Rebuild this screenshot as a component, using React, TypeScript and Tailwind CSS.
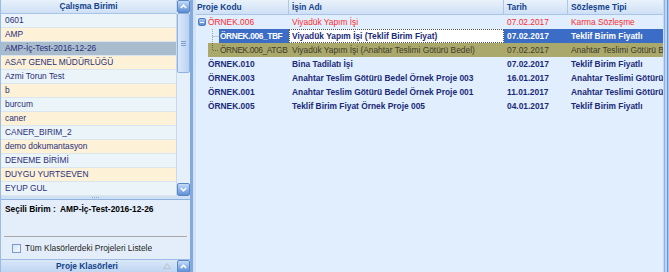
import React from "react";

const units = [
  "0601",
  "AMP",
  "AMP-İç-Test-2016-12-26",
  "ASAT GENEL MÜDÜRLÜĞÜ",
  "Azmi Torun Test",
  "b",
  "burcum",
  "caner",
  "CANER_BIRIM_2",
  "demo dokumantasyon",
  "DENEME BİRİMİ",
  "DUYGU YURTSEVEN",
  "EYUP GUL",
];

type Proje = {
  kod: string;
  ad: string;
  tarih: string;
  tip: string;
  level: number;
  kind: "red" | "sel" | "olive" | "normal";
  last?: boolean;
};

const projeler: Proje[] = [
  { kod: "ÖRNEK.006", ad: "Viyadük Yapım İşi", tarih: "07.02.2017", tip: "Karma Sözleşme", level: 0, kind: "red" },
  { kod: "ÖRNEK.006_TBF", ad: "Viyadük Yapım İşi (Teklif Birim Fiyat)", tarih: "07.02.2017", tip: "Teklif Birim Fiyatlı", level: 1, kind: "sel" },
  { kod: "ÖRNEK.006_ATGB", ad: "Viyadük Yapım İşi (Anahtar Teslimi Götürü Bedel)", tarih: "07.02.2017", tip: "Anahtar Teslimi Götürü Bedel", level: 1, kind: "olive", last: true },
  { kod: "ÖRNEK.010", ad: "Bina Tadilatı İşi", tarih: "07.02.2017", tip: "Teklif Birim Fiyatlı", level: 0, kind: "normal" },
  { kod: "ÖRNEK.003", ad: "Anahtar Teslim Götürü Bedel Örnek Proje 003", tarih: "16.01.2017", tip: "Anahtar Teslimi Götürü Bedel", level: 0, kind: "normal" },
  { kod: "ÖRNEK.001", ad: "Anahtar Teslim Götürü Bedel Örnek Proje 001", tarih: "11.01.2017", tip: "Anahtar Teslimi Götürü Bedel", level: 0, kind: "normal" },
  { kod: "ÖRNEK.005", ad: "Teklif Birim Fiyat Örnek Proje 005", tarih: "04.01.2017", tip: "Teklif Birim Fiyatlı", level: 0, kind: "normal" },
];

function ScrollBtn({ down }: { down?: boolean }) {
  return (
    <div className="w-[13px] h-[13px] shrink-0 rounded-[2px] border border-[#5b86c4] bg-gradient-to-b from-[#c4dcf7] via-[#8db5ea] to-[#5e8fd3] flex items-center justify-center">
      <svg width="7" height="5" viewBox="0 0 7 5">
        <path
          d={down ? "M0.8 1 L3.5 3.8 L6.2 1" : "M0.8 4 L3.5 1.2 L6.2 4"}
          stroke="white"
          strokeWidth="1.5"
          fill="none"
        />
      </svg>
    </div>
  );
}

function TreeCell({ p }: { p: Proje }) {
  if (p.level === 0) {
    return (
      <div className="flex items-center h-full">
        <div className="w-[12px] shrink-0 h-full flex items-center justify-center">
          {p.kind === "red" && (
            <div className="w-[8px] h-[8px] rounded-[2px] border border-[#4f7cc0] bg-gradient-to-b from-[#a9c8f0] to-[#5b8ad0] flex items-center justify-center">
              <div className="w-[4px] h-[1px] bg-white" />
            </div>
          )}
        </div>
        <span>{p.kod}</span>
      </div>
    );
  }
  const sel = p.kind === "sel";
  return (
    <div className="flex items-center h-full">
      <div className={`w-[12px] shrink-0 h-full ${p.kind === "olive" ? "bg-[#dfedfd]" : ""}`} />
      <svg width="11" height="14" viewBox="0 0 11 14" className="shrink-0">
        <path
          d={p.last ? "M4.5 0 V7.5 H11" : "M4.5 0 V14 M4.5 7.5 H11"}
          stroke={p.kind === "olive" ? "#6b6a3e" : "#9aa6b8"}
          strokeWidth="1"
          strokeDasharray="1 1"
          fill="none"
        />
      </svg>
      <div
        className={`h-full flex items-center pl-[1px] flex-1 min-w-0 tracking-[-0.4px] ${
          sel ? "bg-[#3b6cc6] text-white" : ""
        }`}
      >
        {p.kod}
      </div>
    </div>
  );
}

export default function App() {
  return (
    <div className="w-[669px] h-[272px] flex overflow-hidden bg-[#dfeefd] font-['Liberation_Sans',Arial,sans-serif] text-[8.4px] leading-none">
      {/* left panel */}
      <div className="w-[193px] h-full flex flex-col border-l border-r-[3px] border-l-[#9cbbe3] border-r-[#84a9dc] bg-[#e4eefa]">
        <div className="h-[196px] flex">
          <div className="w-[175px] flex flex-col">
            <div className="h-[14px] shrink-0 flex items-center justify-center border-b border-[#a9c4e6] bg-gradient-to-b from-[#e8f1fb] to-[#cfe0f5] font-bold text-[#15428b]">
              Çalışma Birimi
            </div>
            {units.map((u, i) => (
              <div
                key={u}
                className={`h-[14px] shrink-0 flex items-center pl-[4px] border-b border-[#dbe5ee] text-[#2a2f78] ${
                  i === 2 ? "bg-[#a8bccd]" : i % 2 === 0 ? "bg-[#eaf4f9]" : "bg-[#fdf1d7]"
                }`}
              >
                {u}
              </div>
            ))}
          </div>
          <div className="w-[14px] flex flex-col items-center bg-[#e6f0fb] border-l border-[#c7d9ef]">
            <ScrollBtn />
            <div className="w-[13px] h-[60px] rounded-[2px] border border-[#8fb1dd] bg-gradient-to-r from-[#dbe9fa] to-[#b9d2f1] flex flex-col items-center justify-center gap-[1px]">
              <div className="w-[5px] h-[1px] bg-[#7d9fcb]" />
              <div className="w-[5px] h-[1px] bg-[#7d9fcb]" />
              <div className="w-[5px] h-[1px] bg-[#7d9fcb]" />
            </div>
            <div className="flex-1" />
            <ScrollBtn down />
          </div>
        </div>
        <div className="h-[3px] flex items-center justify-center bg-[#cfe0f4] gap-[1px]">
          <div className="w-[1px] h-[1px] bg-[#8aa7cf]" />
          <div className="w-[1px] h-[1px] bg-[#8aa7cf]" />
          <div className="w-[1px] h-[1px] bg-[#8aa7cf]" />
          <div className="w-[1px] h-[1px] bg-[#8aa7cf]" />
        </div>
        <div className="flex-1 flex flex-col border-t border-[#8fb1dd]">
          <div className="flex-1 flex flex-col px-[3px] pt-[5px]">
            <div className="font-bold text-black whitespace-nowrap pl-[1px]">
              Seçili Birim :&nbsp; AMP-İç-Test-2016-12-26
            </div>
            <div className="flex-1" />
            <div className="h-[1px] bg-[#a9a9a9]" />
            <div className="h-[22px] flex items-center pl-[8px] gap-[4px] text-[#1d1d1d]">
              <div className="w-[9px] h-[9px] border border-[#7b9ccc] bg-gradient-to-br from-[#d7e4f6] to-[#f4f8fd]" />
              <span>Tüm Klasörlerdeki Projeleri Listele</span>
            </div>
          </div>
          <div className="h-[13px] flex items-center bg-gradient-to-b from-[#d9e7f8] to-[#bfd5f1] border-t border-[#9dbbe2]">
            <div className="flex-1 text-center font-bold text-[#15428b] pl-[10px]">Proje Klasörleri</div>
            <svg width="8" height="6" viewBox="0 0 8 6" className="mr-[6px]">
              <path d="M4 0.5 L7.5 5.5 H0.5 Z" fill="none" stroke="#b7c3d3" strokeWidth="1" />
            </svg>
            <ScrollBtn />
          </div>
        </div>
      </div>

      {/* splitter */}
      <div className="w-[3px] h-full bg-[#d2e2f5]" />

      {/* right panel */}
      <div className="w-[467px] h-full flex flex-col bg-[#e0eefd]">
        <div className="h-[15px] shrink-0 grid grid-cols-[93px_215px_64px_95px] border-b border-[#a9c4e6] bg-gradient-to-b from-[#e9f2fb] to-[#cfe0f5] font-bold text-[#15428b]">
          <div className="flex items-center pl-[1px] border-r border-[#aec7e6]">Proje Kodu</div>
          <div className="flex items-center pl-[3px] border-r border-[#aec7e6]">İşin Adı</div>
          <div className="flex items-center pl-[3px] border-r border-[#aec7e6]">Tarih</div>
          <div className="flex items-center pl-[3px]">Sözleşme Tipi</div>
        </div>
        {projeler.map((p) => {
          const rowCls =
            p.kind === "red"
              ? "text-[#ff2b2b]"
              : p.kind === "olive"
              ? "bg-[#aaa86b] text-[#3e3d2a]"
              : "font-bold text-[#1b2a78]";
          const sel = p.kind === "sel";
          return (
            <div key={p.kod} className={`h-[14px] shrink-0 grid grid-cols-[93px_215px_64px_95px] whitespace-nowrap ${rowCls}`}>
              <div className="overflow-hidden">
                <TreeCell p={p} />
              </div>
              <div
                className={`flex items-center pl-[2px] overflow-hidden ${
                  sel ? "bg-white border border-dotted border-[#555]" : "pl-[3px]"
                }`}
              >
                {p.ad}
              </div>
              <div className={`flex items-center pl-[3px] overflow-hidden ${sel ? "bg-[#3b6cc6] text-white" : ""}`}>
                {p.tarih}
              </div>
              <div className={`flex items-center pl-[3px] overflow-hidden ${sel ? "bg-[#3b6cc6] text-white" : ""}`}>
                {p.tip}
              </div>
            </div>
          );
        })}
        <div className="flex-1" />
      </div>

      {/* window frame */}
      <div className="w-[6px] h-full flex">
        <div className="w-[1px] bg-[#c6daf3]" />
        <div className="w-[1px] bg-[#8cb1e2]" />
        <div className="w-[2px] bg-[#bcd3f1]" />
        <div className="w-[1px] bg-[#6a95d1]" />
        <div className="w-[1px] bg-[#a9c5eb]" />
      </div>
    </div>
  );
}
